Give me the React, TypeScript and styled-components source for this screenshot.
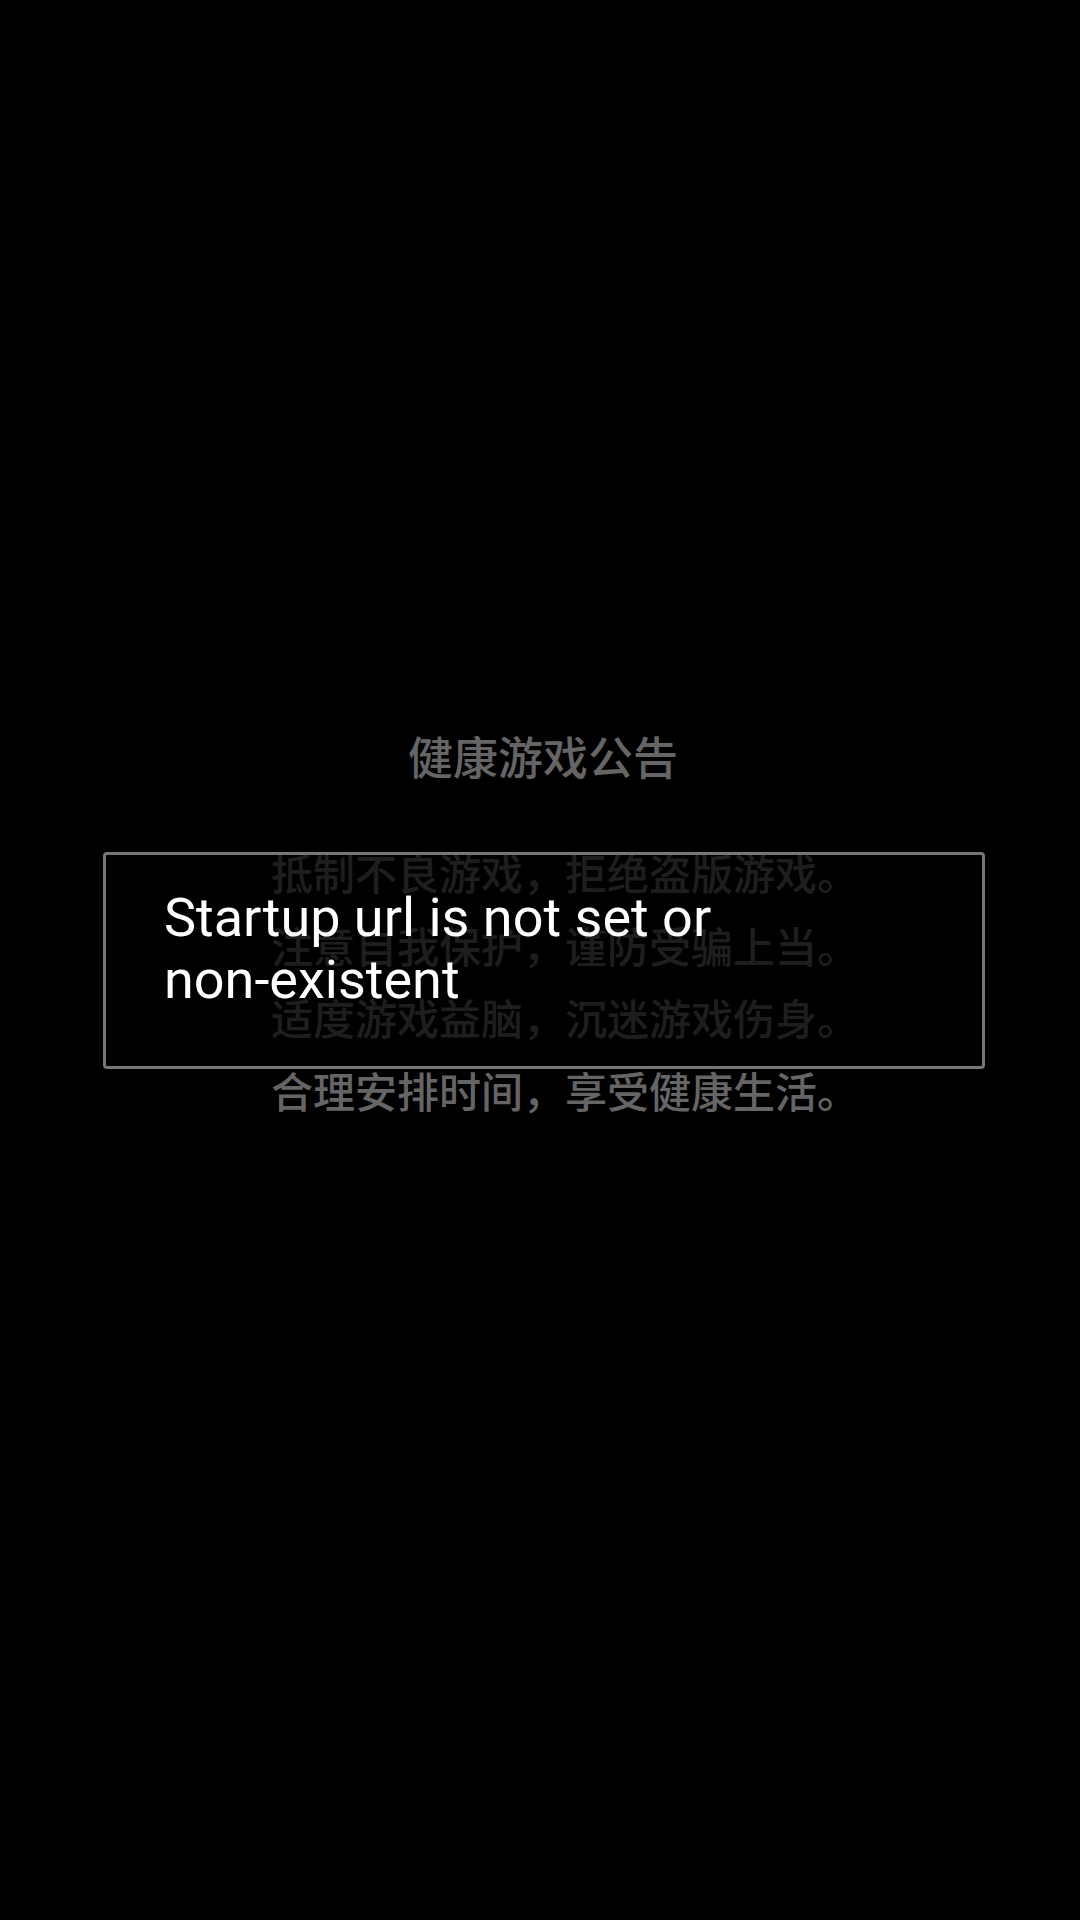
import React from 'react';
import styled, { createGlobalStyle } from 'styled-components';

const GlobalStyle = createGlobalStyle`
  html, body {
    margin: 0;
    padding: 0;
    background: #000000;
  }
`;

const Screen = styled.div`
  position: relative;
  width: 1080px;
  height: 1920px;
  background: #000000;
  overflow: hidden;
`;

const Notice = styled.div`
  display: flex;
  flex-direction: column;
  align-items: center;
  padding-top: 726px;
  font-family: "Noto Sans CJK SC", "Noto Sans", sans-serif;
  font-weight: 500;
  color: #656565;
`;

const NoticeTitle = styled.h1`
  margin: 0 0 0 6px;
  font-size: 45px;
  font-weight: 500;
  line-height: 60px;
`;

const NoticeLines = styled.div`
  margin-top: 50px;
  padding-left: 50px;
`;

const NoticeLine = styled.p`
  margin: 0;
  font-size: 42px;
  line-height: 72.5px;
  white-space: nowrap;
`;

const Toast = styled.div`
  position: absolute;
  top: 852px;
  left: 103px;
  width: 882px;
  height: 217px;
  box-sizing: border-box;
  border: 3px solid #767676;
  border-radius: 4px;
  background: rgba(0, 0, 0, 0.7);
  padding: 32px 58px 0;
`;

const ToastText = styled.p`
  margin: 0;
  width: 610px;
  font-family: Roboto, "Liberation Sans", sans-serif;
  font-size: 54px;
  line-height: 62px;
  color: #ffffff;
`;

const lines = [
  '抵制不良游戏，拒绝盗版游戏。',
  '注意自我保护，谨防受骗上当。',
  '适度游戏益脑，沉迷游戏伤身。',
  '合理安排时间，享受健康生活。',
];

export default function App() {
  return (
    <>
      <GlobalStyle />
      <Screen>
        <Notice>
          <NoticeTitle>健康游戏公告</NoticeTitle>
          <NoticeLines>
            {lines.map((line) => (
              <NoticeLine key={line}>{line}</NoticeLine>
            ))}
          </NoticeLines>
        </Notice>
        <Toast>
          <ToastText>Startup url is not set or non-existent</ToastText>
        </Toast>
      </Screen>
    </>
  );
}
